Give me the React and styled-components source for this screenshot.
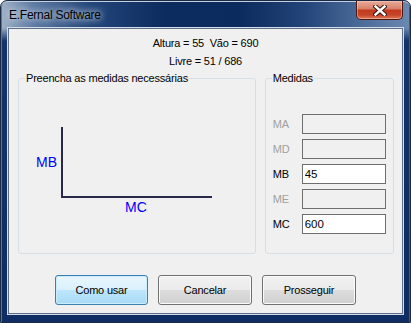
import React from "react";
import styled, { createGlobalStyle } from "styled-components";

const GlobalStyle = createGlobalStyle`
  html, body { margin: 0; padding: 0; background: #ffffff; }
  body { width: 411px; height: 323px; overflow: hidden; }
  * { box-sizing: border-box; }
`;

const Window = styled.div`
  width: 411px;
  height: 323px;
  display: flex;
  flex-direction: column;
  padding: 0 6px 8px 6px;
  border: 1px solid #1b2a45;
  border-radius: 7px 7px 0 0;
  background:
    linear-gradient(180deg, rgba(0,0,0,0) 0, rgba(0,0,0,0) 27px, #13336a 40px, #0f2d62 100%),
    linear-gradient(90deg, #9fb1c7 0%, #5d7aa2 8%, #24467a 22%, #0c2b5e 40%, #0b2a5d 58%, #234478 74%, #4b6b99 88%, #6d89b0 100%);
  box-shadow: inset 0 1px 0 #c3d0df, inset 1px 0 0 #5d7396, inset -1px 0 0 #3d5a88;
  font-family: "Liberation Sans", Arial, sans-serif;
`;

const TitleBar = styled.div`
  height: 27px;
  flex: none;
  display: flex;
  align-items: center;
  justify-content: space-between;
  padding-left: 2px;
`;

const Title = styled.span`
  font-family: "Liberation Sans", Arial, sans-serif;
  font-size: 12px;
  letter-spacing: -0.25px;
  color: #000;
  text-shadow: 0 0 6px rgba(230, 238, 248, 0.95), 0 0 10px rgba(230, 238, 248, 0.8);
`;

const CloseButton = styled.div`
  align-self: flex-start;
  width: 47px;
  height: 19px;
  margin-right: 1px;
  display: flex;
  align-items: center;
  justify-content: center;
  border: 1px solid #4c1a12;
  border-top: none;
  border-radius: 0 0 5px 5px;
  background: linear-gradient(180deg, #e9ab9b 0%, #d8826c 42%, #c23b1f 52%, #c6442a 78%, #df7d5c 100%);
  box-shadow: inset 0 0 0 1px rgba(255, 210, 195, 0.45);
`;

const Client = styled.div`
  flex: 1;
  margin: 0 1px;
  display: flex;
  flex-direction: column;
  background: #f0f0f0;
  border: 1px solid #5e6f87;
  box-shadow: 0 0 0 1px #d3deeb;
  padding: 5px 0 8px 0;
  font-size: 11px;
  color: #000;
`;

const InfoLine = styled.div`
  text-align: center;
  line-height: 18px;
  height: 18px;
  font-size: 11px;
  letter-spacing: -0.2px;
`;

const GroupRow = styled.div`
  display: flex;
  gap: 9px;
  height: 182px;
  margin: 2px 8px 0 9px;
`;

const GroupBox = styled.fieldset`
  margin: 0;
  padding: 0;
  min-width: 0;
  width: ${(p) => p.$width}px;
  height: 100%;
  border: 1px solid #d5dfe5;
  border-radius: 3px;
`;

const Legend = styled.legend`
  margin-left: 6px;
  padding: 0 1px;
  font-size: 11px;
  line-height: 13px;
  letter-spacing: -0.2px;
  color: #000;
`;

const Chart = styled.div`
  position: relative;
  height: 160px;
`;

const ChartSvg = styled.svg`
  position: absolute;
  left: 0;
  top: 0;
`;

const AxisLabel = styled.span`
  position: absolute;
  left: ${(p) => p.$x}px;
  top: ${(p) => p.$y}px;
  font-size: 14px;
  line-height: 14px;
  color: #0000ff;
`;

const Fields = styled.div`
  display: grid;
  grid-template-columns: 29px 84px;
  row-gap: 5px;
  align-items: center;
  padding: 29px 7px 0 7px;
`;

const FieldLabel = styled.label`
  font-size: 11px;
  color: ${(p) => (p.$disabled ? "#a0a0a0" : "#000")};
`;

const TextBox = styled.input`
  width: 84px;
  height: 20px;
  margin: 0;
  padding: 0 2px;
  border: 1px solid #6e6e6e;
  border-radius: 0;
  background: ${(p) => (p.disabled ? "#f0f0f0" : "#ffffff")};
  font-family: "Liberation Sans", Arial, sans-serif;
  font-size: 11.5px;
  color: #000;
  outline: none;
`;

const ButtonRow = styled.div`
  display: flex;
  gap: 10px;
  margin-top: 21px;
  padding-left: 46px;
`;

const Button = styled.button`
  width: ${(p) => p.$width || 94}px;
  height: 30px;
  margin: 0;
  padding: 0;
  border-radius: 3px;
  font-family: "Liberation Sans", Arial, sans-serif;
  font-size: 11px;
  letter-spacing: -0.2px;
  color: #000;
  border: 1px solid ${(p) => (p.$focused ? "#3c7fb1" : "#707070")};
  background: ${(p) =>
    p.$focused
      ? "linear-gradient(180deg, #eaf6fd 0%, #d9f0fc 50%, #bee6fd 51%, #a7d9f5 100%)"
      : "linear-gradient(180deg, #f2f2f2 0%, #ebebeb 50%, #dddddd 51%, #cfcfcf 100%)"};
  box-shadow: inset 0 0 0 1px ${(p) => (p.$focused ? "#c8ecfb" : "#fbfbfb")};
`;

const fields = [
  { name: "MA", value: "", disabled: true },
  { name: "MD", value: "", disabled: true },
  { name: "MB", value: "45", disabled: false },
  { name: "ME", value: "", disabled: true },
  { name: "MC", value: "600", disabled: false },
];

export default function App() {
  return (
    <>
      <GlobalStyle />
      <Window>
        <TitleBar>
          <Title>E.Fernal Software</Title>
          <CloseButton>
            <svg width="14" height="11" viewBox="0 0 14 11">
              <path d="M2.5 1.5 L11.5 9.5 M11.5 1.5 L2.5 9.5" stroke="#3a1a16" strokeWidth="4.5" strokeLinecap="square" />
              <path d="M2.5 1.5 L11.5 9.5 M11.5 1.5 L2.5 9.5" stroke="#ffffff" strokeWidth="2.4" strokeLinecap="square" />
            </svg>
          </CloseButton>
        </TitleBar>
        <Client>
          <InfoLine>Altura = 55&nbsp; Vão = 690</InfoLine>
          <InfoLine>Livre = 51 / 686</InfoLine>
          <GroupRow>
            <GroupBox $width={239}>
              <Legend>Preencha as medidas necessárias</Legend>
              <Chart>
                <ChartSvg width="237" height="160">
                  <line x1="43" y1="42" x2="43" y2="113" stroke="#28284a" strokeWidth="2" />
                  <line x1="42" y1="112" x2="193" y2="112" stroke="#28284a" strokeWidth="2" />
                </ChartSvg>
                <AxisLabel $x={17} $y={70}>MB</AxisLabel>
                <AxisLabel $x={106} $y={115}>MC</AxisLabel>
              </Chart>
            </GroupBox>
            <GroupBox $width={130}>
              <Legend>Medidas</Legend>
              <Fields>
                {fields.map((f) => (
                  <React.Fragment key={f.name}>
                    <FieldLabel $disabled={f.disabled}>{f.name}</FieldLabel>
                    <TextBox disabled={f.disabled} defaultValue={f.value} readOnly />
                  </React.Fragment>
                ))}
              </Fields>
            </GroupBox>
          </GroupRow>
          <ButtonRow>
            <Button $focused $width={93}>Como usar</Button>
            <Button>Cancelar</Button>
            <Button>Prosseguir</Button>
          </ButtonRow>
        </Client>
      </Window>
    </>
  );
}
